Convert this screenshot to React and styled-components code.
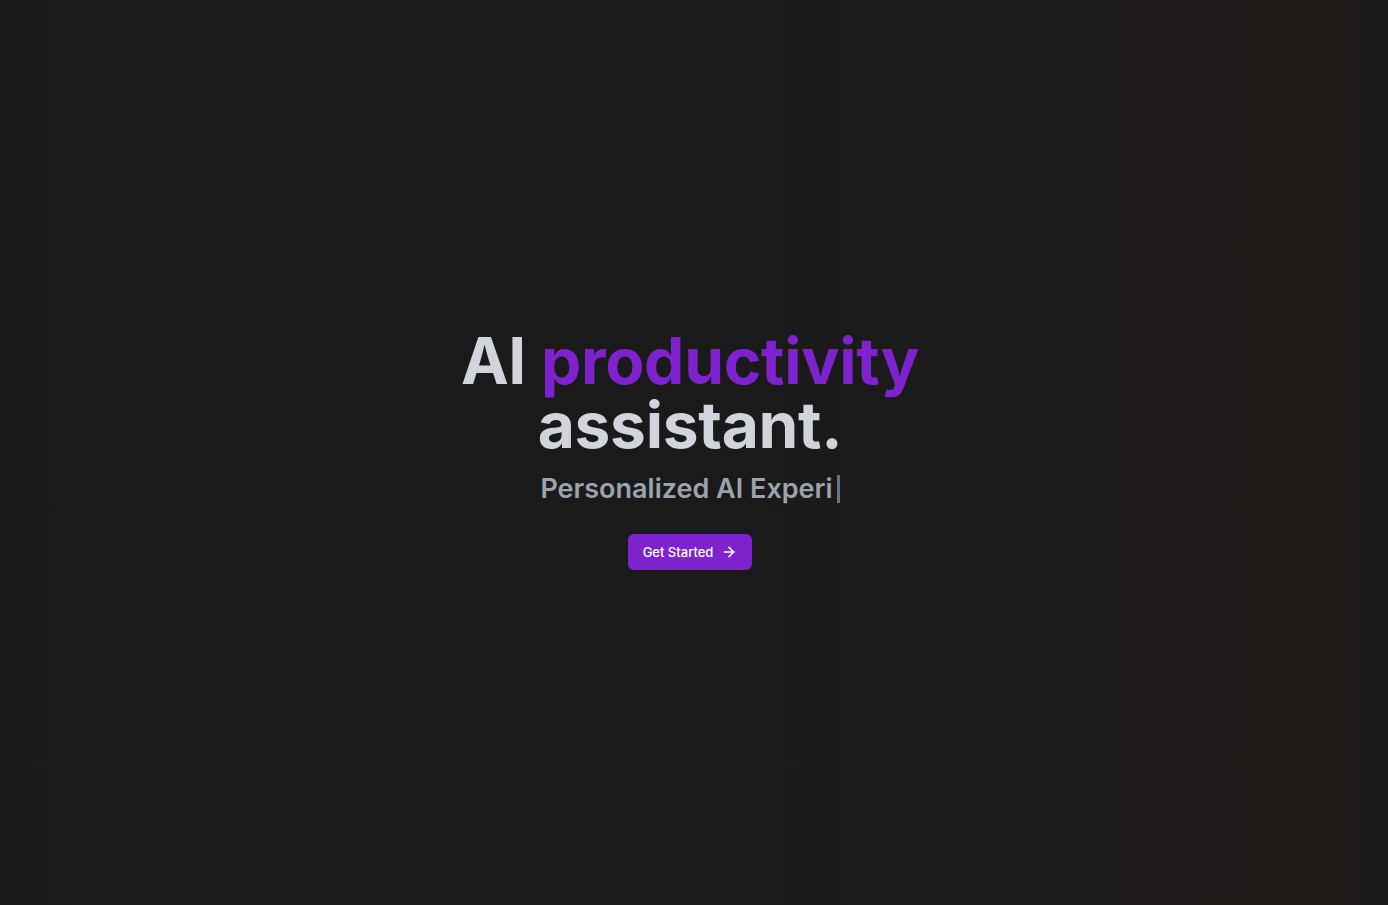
import React from "react";
import styled, { createGlobalStyle } from "styled-components";
import { ArrowRight } from "lucide-react";

const GlobalStyle = createGlobalStyle`
  html, body {
    margin: 0;
    padding: 0;
    background: #1b1a1c;
  }
  * {
    box-sizing: border-box;
  }
`;

const Page = styled.main`
  min-height: 905px;
  display: flex;
  justify-content: center;
  align-items: center;
  padding-right: 8px;
  background: linear-gradient(90deg, #1a1a1c 0%, #1b1a1b 60%, #1e1a18 96%, #1a1919 100%);
  font-family: Inter, "Noto Sans", sans-serif;
`;

const Hero = styled.section`
  display: flex;
  flex-direction: column;
  align-items: center;
  text-align: center;
  margin-top: -6px;
`;

const Title = styled.h1`
  margin: 0;
  font-size: 64px;
  line-height: 64px;
  font-weight: 700;
  letter-spacing: -0.3px;
  color: #d1d5db;
`;

const Accent = styled.span`
  color: #7e22ce;
`;

const Subtitle = styled.p`
  margin: 14px 0 0;
  font-size: 27px;
  line-height: 36px;
  font-weight: 600;
  color: #9ca3af;
  display: flex;
  align-items: center;
`;

const Cursor = styled.span`
  display: inline-block;
  width: 3px;
  height: 28px;
  margin-left: 4px;
  background: #6b7280;
`;

const Button = styled.button`
  margin-top: 27px;
  height: 36px;
  padding: 0 15px;
  display: inline-flex;
  align-items: center;
  gap: 8px;
  border: none;
  border-radius: 6px;
  background: #7e22ce;
  color: #ffffff;
  font-family: Inter, "Noto Sans", sans-serif;
  font-size: 13px;
  font-weight: 500;
  cursor: pointer;
`;

export default function App() {
  return (
    <>
      <GlobalStyle />
      <Page>
        <Hero>
          <Title>
            AI <Accent>productivity</Accent>
            <br />
            assistant.
          </Title>
          <Subtitle>
            Personalized AI Experi
            <Cursor />
          </Subtitle>
          <Button>
            Get Started
            <ArrowRight size={16} strokeWidth={2.5} />
          </Button>
        </Hero>
      </Page>
    </>
  );
}
